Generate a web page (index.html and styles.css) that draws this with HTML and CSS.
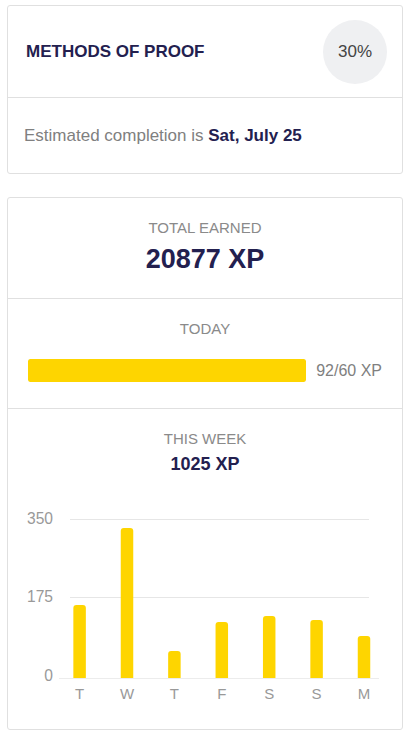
FILE: index.html
```html
<!DOCTYPE html>
<html lang="en">
<head>
<meta charset="utf-8">
<title>Methods of Proof – Progress</title>
<link rel="stylesheet" href="styles.css">
</head>
<body>
  <section class="card course-card">
    <header class="course-head">
      <h1 class="course-title">METHODS OF PROOF</h1>
      <div class="progress-badge">30%</div>
    </header>
    <p class="course-eta">Estimated completion is <strong>Sat, July 25</strong></p>
  </section>

  <section class="card xp-card">
    <div class="xp-block xp-total">
      <div class="xp-label">TOTAL EARNED</div>
      <div class="xp-big">20877 XP</div>
    </div>

    <div class="xp-block xp-today">
      <div class="xp-label">TODAY</div>
      <div class="goal-row">
        <div class="goal-track"><div class="goal-fill" style="width:100%"></div></div>
        <span class="goal-text">92/60 XP</span>
      </div>
    </div>

    <div class="xp-block xp-week">
      <div class="xp-label">THIS WEEK</div>
      <div class="xp-mid">1025 XP</div>
      <svg class="week-chart" width="394" height="210" viewBox="0 0 394 210">
        <g class="grid">
          <line x1="62" y1="19.5" x2="361" y2="19.5"/>
          <line x1="62" y1="97.5" x2="361" y2="97.5"/>
        </g>
        <g class="axis-labels">
          <text x="45" y="23.5">350</text>
          <text x="45" y="101.5">175</text>
          <text x="45" y="180.5">0</text>
        </g>
        <g class="bars">
          <path d="M65.35 178 V108 a3 3 0 0 1 3 -3 h6.5 a3 3 0 0 1 3 3 V178 Z"/>
          <path d="M112.75 178 V31 a3 3 0 0 1 3 -3 h6.5 a3 3 0 0 1 3 3 V178 Z"/>
          <path d="M160.15 178 V154 a3 3 0 0 1 3 -3 h6.5 a3 3 0 0 1 3 3 V178 Z"/>
          <path d="M207.55 178 V125 a3 3 0 0 1 3 -3 h6.5 a3 3 0 0 1 3 3 V178 Z"/>
          <path d="M254.95 178 V119 a3 3 0 0 1 3 -3 h6.5 a3 3 0 0 1 3 3 V178 Z"/>
          <path d="M302.35 178 V123 a3 3 0 0 1 3 -3 h6.5 a3 3 0 0 1 3 3 V178 Z"/>
          <path d="M349.75 178 V139 a3 3 0 0 1 3 -3 h6.5 a3 3 0 0 1 3 3 V178 Z"/>
        </g>
        <line class="baseline" x1="51" y1="178.5" x2="371" y2="178.5"/>
        <g class="day-labels">
          <text x="71.6" y="199">T</text>
          <text x="119" y="199">W</text>
          <text x="166.4" y="199">T</text>
          <text x="213.8" y="199">F</text>
          <text x="261.2" y="199">S</text>
          <text x="308.6" y="199">S</text>
          <text x="356" y="199">M</text>
        </g>
      </svg>
    </div>
  </section>
</body>
</html>
```

FILE: styles.css
```css
* {
  box-sizing: border-box;
}

body {
  margin: 0;
  background: #ffffff;
  font-family: "Liberation Sans", Arial, sans-serif;
  color: #23204f;
}

.card {
  width: 396px;
  margin-left: 7px;
  border: 1px solid #e0e0e0;
  border-radius: 3px;
  background: #fff;
}

.course-card {
  margin-top: 5px;
}

.xp-card {
  margin-top: 23px;
}

/* course header */
.course-head {
  display: flex;
  align-items: center;
  justify-content: space-between;
  padding: 14px 15px 13px 18px;
  border-bottom: 1px solid #e0e0e0;
}

.course-title {
  margin: 0;
  font-size: 17px;
  font-weight: 700;
  line-height: 20px;
  color: #23204f;
}

.progress-badge {
  width: 64px;
  height: 64px;
  border-radius: 50%;
  background: #eff0f2;
  display: flex;
  align-items: center;
  justify-content: center;
  font-size: 17px;
  color: #444;
}

.course-eta {
  margin: 0;
  padding: 28px 16px 27px;
  font-size: 17px;
  line-height: 20px;
  color: #808080;
}

.course-eta strong {
  color: #23204f;
  font-weight: 700;
}

/* XP blocks */
.xp-block {
  text-align: center;
}

.xp-total,
.xp-today {
  border-bottom: 1px solid #e0e0e0;
}

.xp-total {
  padding: 21px 0 23px;
}

.xp-today {
  padding: 21px 20px 26px;
}

.xp-week {
  padding: 21px 0 19px;
}

.xp-label {
  font-size: 15px;
  line-height: 18px;
  color: #8a8a8a;
}

.xp-big {
  margin-top: 6px;
  font-size: 27px;
  line-height: 32px;
  font-weight: 700;
  color: #23204f;
}

.xp-mid {
  margin-top: 5px;
  font-size: 18px;
  line-height: 22px;
  font-weight: 700;
  color: #23204f;
}

/* daily goal bar */
.goal-row {
  margin-top: 21px;
  display: flex;
  align-items: center;
  gap: 10px;
}

.goal-track {
  flex: 1;
  height: 23px;
  border-radius: 2px;
  background: #f1f1f1;
  overflow: hidden;
}

.goal-fill {
  height: 100%;
  background: #fed500;
  border-radius: 2px;
}

.goal-text {
  font-size: 16px;
  line-height: 19px;
  color: #808080;
  white-space: nowrap;
}

/* weekly chart */
.week-chart {
  display: block;
  margin-top: 25px;
  font-family: "Liberation Sans", Arial, sans-serif;
  font-size: 15px;
}

.week-chart .grid line {
  stroke: #e6e6e6;
  stroke-width: 1;
}

.week-chart .baseline {
  stroke: #ececec;
  stroke-width: 1;
}

.week-chart .bars path {
  fill: #fed500;
}

.week-chart .axis-labels text {
  fill: #999;
  font-size: 15.6px;
  text-anchor: end;
}

.week-chart .day-labels text {
  fill: #999;
  text-anchor: middle;
}
```
